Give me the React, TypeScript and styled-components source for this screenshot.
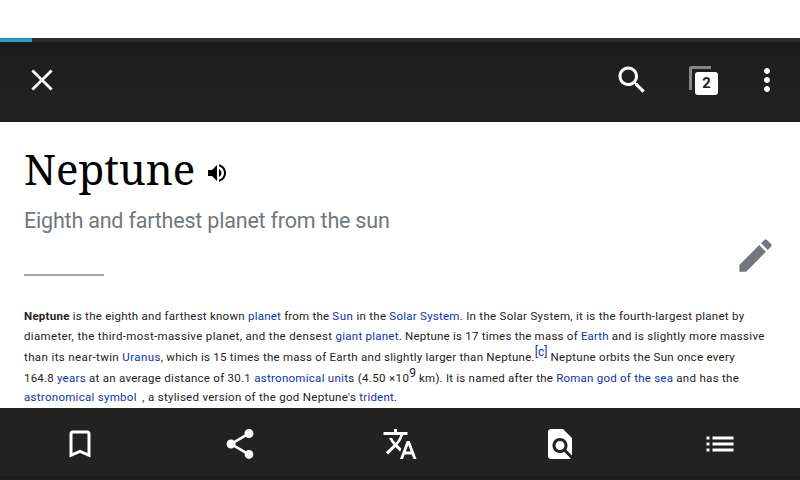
import React from 'react';
import styled, { createGlobalStyle } from 'styled-components';

const GlobalStyle = createGlobalStyle`
  body { margin: 0; background: #fff; }
`;

const Screen = styled.div`
  display: flex;
  flex-direction: column;
  width: 800px;
  height: 480px;
  overflow: hidden;
  background: #fff;
  font-family: Roboto, 'Liberation Sans', sans-serif;
`;

const StatusBar = styled.div`
  flex: none;
  height: 38px;
`;

const ProgressTrack = styled.div`
  flex: none;
  height: 4px;
  background: linear-gradient(#303030, #2a2a2a);
`;

const ProgressFill = styled.div`
  width: 32px;
  height: 4px;
  background: linear-gradient(#3182a6, #2aa3d3 70%, #259bc9);
`;

const Toolbar = styled.header`
  flex: none;
  display: flex;
  align-items: center;
  box-sizing: border-box;
  height: 80px;
  padding: 0 15px 4px 24px;
  background: linear-gradient(#1c1c1c, #222 75%, #222 97%, #191919);
`;

const Spacer = styled.div`
  flex: 1;
`;

const Icon = styled.svg<{ $size?: number }>`
  display: block;
  flex: none;
  width: ${(p) => p.$size ?? 36}px;
  height: ${(p) => p.$size ?? 36}px;
  fill: currentColor;
`;

const IconButton = styled.button<{ $gap?: number }>`
  flex: none;
  margin: 0 0 0 ${(p) => p.$gap ?? 0}px;
  padding: 0;
  border: 0;
  background: none;
  color: #fff;
`;

const TabsButton = styled(IconButton)`
  position: relative;
  width: 29px;
  height: 29px;
`;

const TabsBack = styled.span`
  position: absolute;
  left: 0;
  top: 0;
  width: 19px;
  height: 21px;
  border-left: 3px solid #868686;
  border-top: 3px solid #868686;
  border-top-left-radius: 3px;
`;

const TabsCount = styled.span`
  position: absolute;
  left: 6px;
  top: 6px;
  width: 23px;
  height: 23px;
  border-radius: 3px;
  background: #fff;
  color: #202020;
  font: 700 15px/23px Roboto, sans-serif;
  text-align: center;
`;

const Article = styled.main`
  flex: none;
  box-sizing: border-box;
  height: 286px;
  padding: 22px 24px 0;
  overflow: hidden;
`;

const TitleRow = styled.div`
  display: flex;
  align-items: center;
  height: 58px;
  color: #000;
`;

const Title = styled.h1`
  margin: 0 10px 8px 0;
  font: 400 42px/58px 'Noto Serif', 'DejaVu Serif', serif;
`;

const DescriptionRow = styled.div`
  display: flex;
  justify-content: space-between;
  height: 72px;
  color: #72777d;
`;

const Description = styled.p`
  margin: 5px 0 0;
  font-size: 21.5px;
  line-height: 28px;
  letter-spacing: -0.2px;
`;

const EditButton = styled(IconButton)`
  align-self: flex-start;
  margin: 32px -1px 0 0;
  color: #72777d;
`;

const Divider = styled.div`
  width: 80px;
  height: 2px;
  background: #a2a9b1;
`;

const Paragraph = styled.div`
  margin-top: 30px;
  color: #222;
  font-size: 11.5px;
`;

const Line = styled.div<{ $height: number }>`
  height: ${(p) => p.$height}px;
  line-height: 20px;
  white-space: pre;
`;

const Run = styled.span<{ $track: number }>`
  letter-spacing: ${(p) => p.$track}px;
`;

const Strong = styled(Run)`
  font-weight: 700;
`;

const Link = styled(Run)`
  color: #0c31b8;
`;

const Sup = styled.sup<{ $link?: boolean }>`
  position: relative;
  top: -5px;
  color: ${(p) => (p.$link ? '#0c31b8' : 'inherit')};
  font-size: 12px;
  line-height: 0;
  vertical-align: baseline;
`;

const SymbolGap = styled.span`
  display: inline-block;
  width: 5.5px;
`;

const BottomBar = styled.nav`
  flex: none;
  display: grid;
  grid-template-columns: repeat(5, 1fr);
  place-items: center;
  box-sizing: border-box;
  height: 72px;
  background: linear-gradient(#222 68px, #1f1b1c 68px);
`;

const icons = {
  search:
    'M15.5 14h-.79l-.28-.27C15.41 12.59 16 11.11 16 9.5 16 5.91 13.09 3 9.5 3S3 5.91 3 9.5 5.91 16 9.5 16c1.61 0 3.09-.59 4.23-1.57l.27.28v.79l5 4.99L20.49 19l-4.99-5zm-6 0C7.01 14 5 11.99 5 9.5S7.01 5 9.5 5 14 7.01 14 9.5 11.99 14 9.5 14z',
  more: 'M12 8c1.1 0 2-.9 2-2s-.9-2-2-2-2 .9-2 2 .9 2 2 2zm0 2c-1.1 0-2 .9-2 2s.9 2 2 2 2-.9 2-2-.9-2-2-2zm0 6c-1.1 0-2 .9-2 2s.9 2 2 2 2-.9 2-2-.9-2-2-2z',
  volume:
    'M3 9v6h4l5 5V4L7 9H3zm13.5 3c0-1.77-1.02-3.29-2.5-4.03v8.05c1.48-.73 2.5-2.25 2.5-4.02zM14 3.23v2.06c2.89.86 5 3.54 5 6.71s-2.11 5.85-5 6.71v2.06c4.01-.91 7-4.49 7-8.77s-2.99-7.86-7-8.77z',
  edit: 'M3 17.25V21h3.75L17.81 9.94l-3.75-3.75L3 17.25zM20.71 7.04c.39-.39.39-1.02 0-1.41l-2.34-2.34c-.39-.39-1.02-.39-1.41 0l-1.83 1.83 3.75 3.75 1.83-1.83z',
  bookmark:
    'M17 3H7c-1.1 0-1.99.9-1.99 2L5 21l7-3 7 3V5c0-1.1-.9-2-2-2zm0 15l-5-2.18L7 18V5h10v13z',
  share:
    'M18 16.08c-.76 0-1.44.3-1.96.77L8.91 12.7c.05-.23.09-.46.09-.7s-.04-.47-.09-.7l7.05-4.11c.54.5 1.25.81 2.04.81 1.66 0 3-1.34 3-3s-1.34-3-3-3-3 1.34-3 3c0 .24.04.47.09.7L8.04 9.81C7.5 9.31 6.79 9 6 9c-1.66 0-3 1.34-3 3s1.34 3 3 3c.79 0 1.5-.31 2.04-.81l7.12 4.16c-.05.21-.08.43-.08.65 0 1.61 1.31 2.92 2.92 2.92 1.61 0 2.92-1.31 2.92-2.92s-1.31-2.92-2.92-2.92z',
  translate:
    'M12.87 15.07l-2.54-2.51.03-.03c1.74-1.94 2.98-4.17 3.71-6.53H17V4h-7V2H8v2H1v1.99h11.17C11.5 7.92 10.44 9.75 9 11.35 8.07 10.32 7.3 9.19 6.69 8h-2c.73 1.63 1.73 3.17 2.98 4.56l-5.09 5.02L4 19l5-5 3.11 3.11.76-2.04zM18.5 10h-2L12 22h2l1.12-3h4.75L21 22h2l-4.5-12zm-2.62 7l1.62-4.33L19.12 17h-3.24z',
  findInPage:
    'M20 19.59V8l-6-6H6c-1.1 0-1.99.9-1.99 2L4 20c0 1.1.89 2 1.99 2H18c.45 0 .85-.15 1.19-.4l-4.43-4.43c-.8.52-1.74.83-2.76.83-2.76 0-5-2.24-5-5s2.24-5 5-5 5 2.24 5 5c0 1.02-.31 1.96-.83 2.75L20 19.59zM9 13c0 1.66 1.34 3 3 3s3-1.34 3-3-1.34-3-3-3-3 1.34-3 3z',
  list: 'M3 13h2v-2H3v2zm0 4h2v-2H3v2zm0-8h2V7H3v2zm4 4h14v-2H7v2zm0 4h14v-2H7v2zM7 7v2h14V7H7z',
};

const Glyph = ({ name, size }: { name: keyof typeof icons; size?: number }) => (
  <Icon $size={size} viewBox="0 0 24 24">
    <path d={icons[name]} />
  </Icon>
);

const bottomActions: { name: keyof typeof icons; label: string }[] = [
  { name: 'bookmark', label: 'Save' },
  { name: 'share', label: 'Share' },
  { name: 'translate', label: 'Language' },
  { name: 'findInPage', label: 'Find in page' },
  { name: 'list', label: 'Contents' },
];

export default function App() {
  return (
    <Screen>
      <GlobalStyle />
      <StatusBar />
      <ProgressTrack>
        <ProgressFill />
      </ProgressTrack>
      <Toolbar>
        <IconButton aria-label="Close">
          <Icon viewBox="0 0 24 24">
            <path d="M5.6 5.6L18.4 18.4M18.4 5.6L5.6 18.4" stroke="currentColor" strokeWidth="1.85" />
          </Icon>
        </IconButton>
        <Spacer />
        <IconButton aria-label="Search">
          <Glyph name="search" />
        </IconButton>
        <TabsButton $gap={39} aria-label="Tabs">
          <TabsBack />
          <TabsCount>2</TabsCount>
        </TabsButton>
        <IconButton $gap={31} aria-label="More">
          <Glyph name="more" />
        </IconButton>
      </Toolbar>
      <Article>
        <TitleRow>
          <Title>Neptune</Title>
          <Glyph name="volume" size={24} />
        </TitleRow>
        <DescriptionRow>
          <Description>Eighth and farthest planet from the sun</Description>
          <EditButton aria-label="Edit">
            <Glyph name="edit" size={43} />
          </EditButton>
        </DescriptionRow>
        <Divider />
        <Paragraph>
          <Line $height={20}>
            <Strong $track={0.27}>Neptune</Strong>
            <Run $track={0.25}> is the eighth and farthest known </Run>
            <Link $track={0.22}>planet</Link>
            <Run $track={0.21}> from the </Run>
            <Link $track={0.5}>Sun</Link>
            <Run $track={0.26}> in the </Run>
            <Link $track={0.25}>Solar System</Link>
            <Run $track={0.286}>. In the Solar System, it is the fourth-largest planet by</Run>
          </Line>
          <Line $height={21}>
            <Run $track={0.35}>diameter, the third-most-massive planet, and the densest </Run>
            <Link $track={0.24}>giant planet</Link>
            <Run $track={0.23}>. Neptune is 17 times the mass of </Run>
            <Link $track={0.12}>Earth</Link>
            <Run $track={0.29}> and is slightly more massive</Run>
          </Line>
          <Line $height={21}>
            <Run $track={0.38}>than its near-twin </Run>
            <Link $track={0.4}>Uranus</Link>
            <Run $track={0.26}>, which is 15 times the mass of Earth and slightly larger than Neptune.</Run>
            <Sup $link>[c]</Sup>
            <Run $track={0.29}> Neptune orbits the Sun once every</Run>
          </Line>
          <Line $height={19}>
            <Run $track={0.2}>164.8 </Run>
            <Link $track={0.28}>years</Link>
            <Run $track={0.275}> at an average distance of 30.1 </Run>
            <Link $track={0.276}>astronomical unit</Link>
            <Run $track={0.36}>s (4.50 ×10</Run>
            <Sup>9</Sup>
            <Run $track={0.22}> km). It is named after the </Run>
            <Link $track={0.235}>Roman god of the sea</Link>
            <Run $track={0.3}> and has the</Run>
          </Line>
          <Line $height={20}>
            <Link $track={0.29}>astronomical symbol</Link>
            <SymbolGap />
            <Run $track={0.293}>, a stylised version of the god Neptune's </Run>
            <Link $track={0.21}>trident</Link>
            <Run $track={0}>.</Run>
          </Line>
        </Paragraph>
      </Article>
      <BottomBar>
        {bottomActions.map((action) => (
          <IconButton key={action.name} aria-label={action.label}>
            <Glyph name={action.name} />
          </IconButton>
        ))}
      </BottomBar>
    </Screen>
  );
}
